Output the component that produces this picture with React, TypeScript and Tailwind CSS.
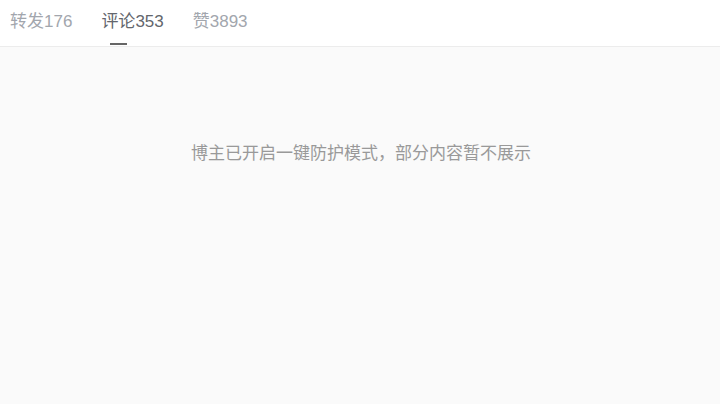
export default function App() {
  const font = { fontFamily: '"Liberation Sans", "Noto Sans CJK SC", sans-serif' };
  return (
    <div className="w-[720px] h-[404px] flex flex-col bg-[#fafafa]" style={font}>
      <div className="h-[47px] shrink-0 bg-white border-b border-[#ececec] flex items-start pl-[10px] gap-[29px]">
        <div className="relative pt-[11px] text-[17px] leading-[22px] text-[#a2a6ad]">
          <span>转发</span>
          <span>176</span>
        </div>
        <div className="relative pt-[11px] text-[17px] leading-[22px] text-[#63666c]">
          <span className="relative">
            评论
            <span className="absolute left-[9px] top-[31px] w-[17px] h-[2px] bg-[#666]" />
          </span>
          <span>353</span>
        </div>
        <div className="relative pt-[11px] text-[17px] leading-[22px] text-[#a2a6ad]">
          <span>赞</span>
          <span>3893</span>
        </div>
      </div>
      <div className="flex justify-center pt-[96px]">
        <p className="text-[17px] leading-[22px] text-[#999] pl-[2px]">博主已开启一键防护模式，部分内容暂不展示</p>
      </div>
    </div>
  );
}
